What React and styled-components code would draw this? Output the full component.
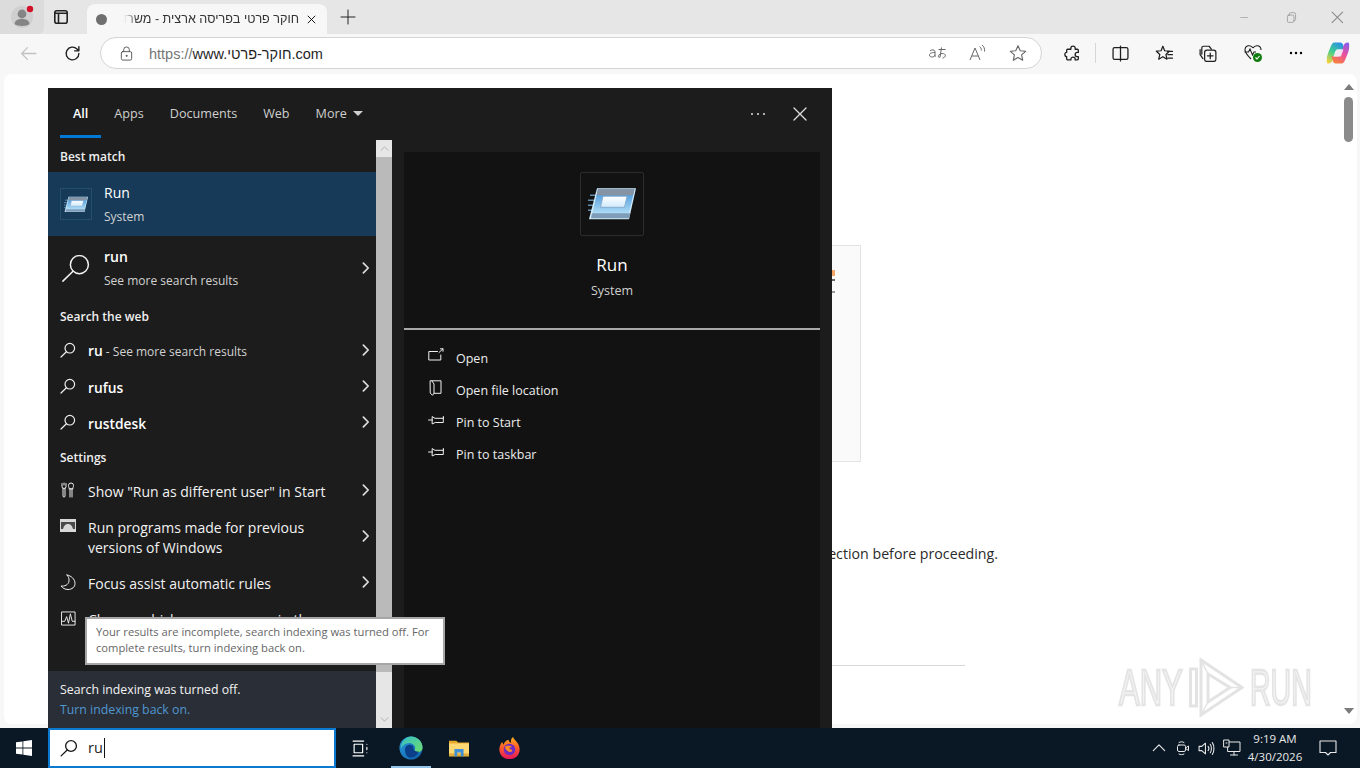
import React from 'react';
import styled, { createGlobalStyle } from 'styled-components';

const GlobalStyle = createGlobalStyle`
    html, body {
        margin:0;
        padding:0;
        background:#f7f7f7;
    }
    * {
        box-sizing:border-box;
    }
`

const uiFont = `"Open Sans", "Noto Sans", sans-serif`;

// Window frame
const Screen = styled.div`
    width:1360px;
    height:768px;
    display:flex;
    overflow:hidden;
    position:relative;
    flex-direction:column;
    font-family:${uiFont};
    background-color:#f7f7f7;
`

const TabStrip = styled.div`
    height:34px;
    display:flex;
    flex:none;
    align-items:flex-end;
    background-color:#e6e6e6;
`

const ProfileSlot = styled.div`
    width:44px;
    height:34px;
    display:flex;
    align-items:center;
    justify-content:center;
    background-color:#dcdcdc;
    border-bottom-right-radius:6px;
`

const StripButton = styled.div`
    width:${p => p.$w || 43}px;
    height:34px;
    display:flex;
    flex:none;
    color:${p => p.$color || '#222'};
    align-items:center;
    justify-content:center;
`

const Tab = styled.div`
    width:240px;
    height:30px;
    display:flex;
    flex:none;
    padding:0 10px 0 9px;
    align-items:center;
    background-color:#f7f7f7;
    border-radius:8px 8px 0 0;
`

const Favicon = styled.span`
    width:11px;
    height:11px;
    flex:none;
    border-radius:50%;
    background-color:#6f6f6f;
`

const TabTitle = styled.span`
    flex:1;
    height:18px;
    overflow:hidden;
    margin:0 7px 0 17px;
    font-size:12.6px;
    line-height:18px;
    color:#333;
    direction:rtl;
    white-space:nowrap;
    font-family:"Liberation Sans", sans-serif;
    mask-image:linear-gradient(to right, transparent 0, #000 14px);
`

const WindowControls = styled.div`
    display:flex;
    margin-left:auto;
    padding-right:0;
`

const Toolbar = styled.div`
    height:38px;
    flex:none;
    display:flex;
    align-items:center;
    background-color:#f7f7f7;
`

const ToolButton = styled.div`
    width:${p => p.$w || 44}px;
    height:32px;
    display:flex;
    flex:none;
    color:${p => p.$color || '#1f1f1f'};
    align-items:center;
    justify-content:center;
`

const AddressBar = styled.div`
    width:942px;
    height:32px;
    display:flex;
    flex:none;
    margin:0 7px 0 12px;
    padding:0 3px 0 18px;
    align-items:center;
    color:#555;
    background-color:#fff;
    border:1px solid #d4d4d4;
    border-radius:16px;
`

const UrlText = styled.span`
    font-size:14.5px;
    margin-left:15px;
    padding-top:1px;
    color:#1f1f1f;
    font-family:"Liberation Sans", sans-serif;
`

const UrlScheme = styled.span`
    color:#767676;
`

const AddressIcons = styled.div`
    display:flex;
    margin-left:auto;
    color:#666;
`

const ToolDivider = styled.div`
    width:1px;
    height:20px;
    flex:none;
    background-color:#d6d6d6;
`

// Page behind the search panel
const Viewport = styled.div`
    flex:1;
    display:flex;
    min-height:0;
    padding:2px 3px 4px 4px;
`

const Page = styled.div`
    flex:1;
    display:flex;
    overflow:hidden;
    position:relative;
    padding:171px 0 0 400px;
    background-color:#fff;
    border-radius:8px;
`

const PageColumn = styled.div`
    width:594px;
    display:flex;
    flex-direction:column;
`

const InfoCard = styled.div`
    width:457px;
    height:217px;
    display:flex;
    padding:24px 25px 0 0;
    flex-direction:column;
    align-items:flex-end;
    background-color:#fafafa;
    border:1px solid #e3e3e3;
`

const CardMark = styled.span`
    width:4px;
    height:${p => p.$h}px;
    margin-bottom:${p => p.$gap}px;
    background-color:${p => p.$color};
`

const Notice = styled.p`
    margin:82px 0 0;
    font-size:14.2px;
    line-height:20px;
    color:#2a2a2a;
    text-align:right;
    white-space:nowrap;
    font-family:${uiFont};
`

const PageRule = styled.hr`
    width:561px;
    height:1px;
    border:none;
    margin:101px 0 0;
    background-color:#d8d8d8;
`

const PageScrollbar = styled.div`
    width:15px;
    display:flex;
    position:absolute;
    top:10px;
    right:1px;
    bottom:10px;
    color:#7b7b7b;
    align-items:center;
    flex-direction:column;
    justify-content:space-between;
`

const PageThumb = styled.div`
    width:9px;
    height:45px;
    margin:7px 0 auto;
    border-radius:5px;
    background-color:#8b8b8b;
`

const Watermark = styled.div`
    display:flex;
    position:absolute;
    right:45px;
    bottom:6px;
    align-items:center;
    gap:6px;
    filter:blur(0.5px);
`

const WatermarkWord = styled.span`
    width:${p => p.$w}px;
    display:block;
    font-size:50px;
    line-height:60px;
    font-family:"Liberation Sans", sans-serif;
    color:#f4f4f4;
    -webkit-text-stroke:2.5px #e4e4e4;
    transform:scaleX(${p => p.$sx});
    transform-origin:left center;
    white-space:nowrap;
`

// Search panel
const SearchPanel = styled.div`
    width:784px;
    height:640px;
    display:flex;
    position:absolute;
    top:88px;
    left:48px;
    flex-direction:column;
    background-color:#1c1c1c;
`

const PanelHeader = styled.div`
    height:52px;
    flex:none;
    display:flex;
    padding:0 12px;
    align-items:stretch;
`

const HeaderTab = styled.div`
    display:flex;
    position:relative;
    padding:0 13px 2px;
    font-size:12.6px;
    align-items:center;
    gap:6px;
    font-weight:${p => p.$active ? 600 : 400};
    color:${p => p.$active ? '#fff' : '#cfcfcf'};

    &::after{
        content:'';
        position:absolute;
        left:0;
        right:0;
        bottom:2px;
        height:3px;
        background-color:${p => p.$active ? '#0078d4' : 'transparent'};
    }
`

const HeaderActions = styled.div`
    display:flex;
    margin-left:auto;
    color:#dedede;
    gap:26px;
    padding-right:12px;
    align-items:center;
`

const PanelBody = styled.div`
    flex:1;
    display:flex;
    min-height:0;
`

const ResultsColumn = styled.div`
    width:328px;
    flex:none;
    display:flex;
    overflow:hidden;
    flex-direction:column;
`

const SectionLabel = styled.div`
    height:32px;
    flex:none;
    display:flex;
    padding:${p => p.$low ? 2 : 0}px 0 0 12px;
    font-size:12px;
    font-weight:600;
    color:#f0f0f0;
    align-items:center;
`

const HeroRow = styled.div`
    height:64px;
    flex:none;
    display:flex;
    padding-left:12px;
    align-items:center;
    color:#fff;
    background-color:${p => p.$selected ? '#173a59' : 'transparent'};
`

const HeroIcon = styled.div`
    width:32px;
    height:32px;
    flex:none;
    display:flex;
    margin-right:12px;
    color:#f2f2f2;
    align-items:center;
    justify-content:center;
    border:1px solid ${p => p.$boxed ? '#24506f' : 'transparent'};
`

const HeroText = styled.div`
    flex:1;
    display:flex;
    padding-top:2px;
    flex-direction:column;
    gap:6px;
`

const HeroTitle = styled.span`
    font-size:14px;
    line-height:18px;
    font-weight:${p => p.$bold ? 600 : 400};
    color:#fff;
`

const HeroSub = styled.span`
    font-size:12px;
    line-height:18px;
    color:#d2d2d2;
`

const ResultRow = styled.div`
    height:${p => p.$h || 36}px;
    flex:none;
    display:flex;
    padding-left:12px;
    align-items:center;
    color:#f0f0f0;
`

const ResultIcon = styled.div`
    width:16px;
    height:20px;
    flex:none;
    display:flex;
    margin-right:12px;
    align-items:center;
    justify-content:center;
    align-self:${p => p.$top ? 'flex-start' : 'center'};
    margin-top:${p => p.$top ? 7 : 0}px;
`

const ResultText = styled.div`
    flex:1;
    padding-top:3px;
    font-size:14px;
    line-height:20px;
    color:#f2f2f2;
    white-space:${p => p.$wrap ? 'normal' : 'nowrap'};
`

const Bold = styled.span`
    font-weight:600;
    font-size:13.8px;
    color:#fff;
`

const Muted = styled.span`
    font-size:12px;
    color:#d2d2d2;
`

const Chevron = styled.div`
    width:20px;
    flex:none;
    display:flex;
    color:#dcdcdc;
    align-items:center;
    justify-content:center;
`

const IndexNotice = styled.div`
    height:57px;
    flex:none;
    display:flex;
    margin-top:auto;
    padding:9px 12px 0;
    font-size:12.3px;
    line-height:20px;
    color:#f2f2f2;
    flex-direction:column;
    background-color:#2a2e37;
`

const IndexLink = styled.span`
    color:#4f97d0;
`

const ResultsScrollbar = styled.div`
    width:16px;
    flex:none;
    display:flex;
    flex-direction:column;
    background-color:#e6e6e6;
    color:#a8a8a8;
`

const ScrollArrow = styled.div`
    height:${p => p.$h}px;
    flex:none;
    display:flex;
    align-items:center;
    justify-content:center;
    margin-top:${p => p.$auto ? 'auto' : 0};
`

const ScrollThumb = styled.div`
    height:515px;
    flex:none;
    background-color:#bababa;
`

const PreviewPane = styled.div`
    flex:1;
    display:flex;
    margin:12px 12px 0;
    flex-direction:column;
    background-color:#121212;
`

const PreviewHead = styled.div`
    height:178px;
    flex:none;
    display:flex;
    padding-top:20px;
    align-items:center;
    flex-direction:column;
    border-bottom:2px solid #a8a8a8;
`

const PreviewIcon = styled.div`
    width:64px;
    height:64px;
    display:flex;
    margin-bottom:18px;
    align-items:center;
    justify-content:center;
    border:1px solid #2c2c2c;
    border-radius:2px;
`

const PreviewTitle = styled.div`
    font-size:17px;
    line-height:22px;
    color:#fff;
`

const PreviewSub = styled.div`
    margin-top:6px;
    font-size:12.5px;
    line-height:18px;
    color:#d0d0d0;
`

const ActionList = styled.div`
    display:flex;
    padding:12px 0 0 24px;
    flex-direction:column;
`

const ActionRow = styled.div`
    height:32px;
    display:flex;
    font-size:12.5px;
    color:#ececec;
    align-items:center;
`

const ActionIcon = styled.div`
    width:16px;
    height:16px;
    flex:none;
    display:flex;
    margin:-4px 12px 0 0;
    color:#f0f0f0;
    align-items:center;
    justify-content:center;
`

const Tooltip = styled.div`
    width:360px;
    height:48px;
    position:absolute;
    top:617px;
    left:85px;
    padding:5px 9px;
    font-size:11.2px;
    line-height:16px;
    color:#666;
    background-color:#fff;
    border:2px solid #a6a6a6;
`

// Taskbar
const Taskbar = styled.div`
    height:40px;
    flex:none;
    display:flex;
    align-items:stretch;
    background-color:#0a1825;
`

const StartButton = styled.div`
    width:48px;
    display:flex;
    flex:none;
    align-items:center;
    justify-content:center;
`

const TaskSearch = styled.div`
    width:288px;
    display:flex;
    flex:none;
    padding-left:10px;
    align-items:center;
    color:#1a1a1a;
    background-color:#fff;
    border:2px solid #0a7ad1;
`

const TaskSearchText = styled.span`
    font-size:14.5px;
    margin-left:10px;
    padding-right:1px;
    line-height:20px;
    border-right:1px solid #111;
`

const TaskApps = styled.div`
    display:flex;
    padding-left:1px;
`

const TaskApp = styled.div`
    width:${p => p.$w || 48}px;
    display:flex;
    flex:none;
    color:#fff;
    position:relative;
    align-items:center;
    justify-content:center;

    &::after{
        content:'';
        position:absolute;
        left:8px;
        right:8px;
        bottom:0;
        height:2px;
        background-color:${p => p.$open ? '#93c5ea' : 'transparent'};
    }
`

const Tray = styled.div`
    display:flex;
    margin-left:auto;
    padding-right:8px;
    color:#e8e8e8;
    align-items:center;
`

const TrayIcon = styled.div`
    width:${p => p.$w || 24}px;
    display:flex;
    flex:none;
    align-items:center;
    justify-content:center;
`

const Clock = styled.div`
    width:58px;
    display:flex;
    font-size:11.5px;
    line-height:18px;
    color:#e8e8e8;
    align-items:center;
    flex-direction:column;
`

const Notify = styled.div`
    width:48px;
    display:flex;
    flex:none;
    align-items:center;
    justify-content:center;
`

// Drawings
const Line = ({ size = 16, w = 1.2, children, vb = 16 }) => (
    <svg width={size} height={size} viewBox={`0 0 ${vb} ${vb}`} fill="none" stroke="currentColor" strokeWidth={w} strokeLinecap="round" strokeLinejoin="round">
        {children}
    </svg>
)

const Lens = ({ size = 18, w = 1.2 }) => (
    <Line size={size} w={w}>
        <circle cx="9.8" cy="6.2" r="4.8" />
        <path d="M6.4 9.7 1 15" />
    </Line>
)

const ChevronRight = () => (
    <Line size={14} w={2}>
        <path d="M5 2.5 10.5 8 5 13.5" />
    </Line>
)

const RunIcon = ({ size = 48 }) => (
    <svg width={size} height={size * 0.7} viewBox="0 0 48 33">
        <defs>
            <linearGradient id={`run-${size}`} x1="0" y1="0" x2="0" y2="1">
                <stop offset="0" stopColor="#3f8fd6" />
                <stop offset="1" stopColor="#c4ecfd" />
            </linearGradient>
            <linearGradient id={`run-glass-${size}`} x1="0" y1="0" x2="0" y2="1">
                <stop offset="0" stopColor="#ffffff" />
                <stop offset="1" stopColor="#cfeafc" />
            </linearGradient>
        </defs>
        <path d="M2 8h7M0 13h6M0 18h5M0 23h4" stroke="#7fb6e0" strokeWidth="1.6" opacity="0.75" />
        <path d="M9 1h39l-7 31H1z" fill="#d4eefc" />
        <path d="M10 2h36.500l-6.500 29H3z" fill={`url(#run-${size})`} />
        <path d="M10 2h36.500l-1.500 6H8.500z" fill="#8593a3" />
        <path d="M4 26h38.500l-1.500 5H3z" fill="#7f9db8" />
        <path d="M15 9h24l-2.500 11H12.500z" fill={`url(#run-glass-${size})`} stroke="#7da3c4" strokeWidth="0.8" />
    </svg>
)

const AvatarIcon = () => (
    <svg width="24" height="24" viewBox="0 0 24 24">
        <circle cx="12" cy="12" r="11" fill="#cfcfcf" />
        <circle cx="12" cy="9" r="4.4" fill="#858585" />
        <path d="M4.500 19c.5-4 3.500-5 7.500-5s7 1 7.500 5c-2 2.500-13 2.500-15 0z" fill="#858585" />
        <circle cx="20" cy="4" r="3.200" fill="#d2112a" />
    </svg>
)

const SidebarIcon = () => (
    <Line size={16} w={1.6}>
        <rect x="1.800" y="1.800" width="12.400" height="12.400" rx="2" />
        <path d="M5.500 4.200v9.800M2 4.200h12" />
    </Line>
)

const EdgeLogo = () => (
    <svg width="24" height="24" viewBox="0 0 26 26">
        <defs>
            <linearGradient id="edge-blue" x1="0" y1="0" x2="1" y2="1">
                <stop offset="0" stopColor="#2a9fdc" />
                <stop offset="1" stopColor="#0c59a4" />
            </linearGradient>
            <linearGradient id="edge-green" x1="0" y1="0" x2="1" y2="1">
                <stop offset="0" stopColor="#36c0c8" />
                <stop offset="1" stopColor="#6fdc6a" />
            </linearGradient>
        </defs>
        <circle cx="13" cy="13" r="12.500" fill="url(#edge-blue)" />
        <path d="M13 .5C20 .5 25.500 6 25.500 12.500c0 3.500-3 5.500-6 5.500-2 0-3.500-.8-3.500-1.500 0-.6 1.500-1 1.500-3.500 0-3-3-5.500-6.500-5.500-4 0-7 2.500-9 6C2.500 6 7 .5 13 .5z" fill="url(#edge-green)" />
        <path d="M6.500 15c0-3.500 2.500-5.500 5.500-5.500 2 0 3.500 1.500 3.500 3 0 3 3 5 6 4-1.500 4-5 7-9 7-3.500 0-6-4-6-8.500z" fill="#0b3f8a" />
    </svg>
)

const FolderLogo = () => (
    <svg width="22" height="20" viewBox="0 0 24 22">
        <path d="M1 3h8l2 2h12v15H1z" fill="#e8a92b" />
        <rect x="1" y="6" width="22" height="14" fill="#fbd873" />
        <rect x="1" y="17" width="22" height="3" fill="#e0ad3a" />
        <path d="M7 12h10v8h-3v-4h-4v4H7z" fill="#3f8fd8" />
    </svg>
)

const FirefoxLogo = () => (
    <svg width="23" height="24" viewBox="0 0 24 26">
        <defs>
            <linearGradient id="ff" x1="0.5" y1="0" x2="0.5" y2="1">
                <stop offset="0" stopColor="#ffb11a" />
                <stop offset="0.5" stopColor="#ff5a2b" />
                <stop offset="1" stopColor="#e3135f" />
            </linearGradient>
        </defs>
        <path d="M12 25C5.500 25 1 20.500 1 14.500 1 11 2.500 8.500 4 6.500l1.500 3C6.500 6.500 9 4 11 4c0 2 2 3 3 3.500-1-2-.5-5 2-6.500 0 3 7 5.500 7 13.500C23 20.500 18.500 25 12 25z" fill="url(#ff)" />
        <circle cx="12" cy="14.500" r="6.200" fill="#6e2cc4" />
        <path d="M7 12c2-2 6-2 8 0-2-.5-3 .5-3 2 2 0 3 1 3 2.500-3 2-7 0-8-4.500z" fill="#ff8a1f" />
    </svg>
)

const lobe = 'M8.500 1.500H14c2 0 3 1.500 3.500 3.500l1 3.500H12c-1.500 0-2.500 1-3 2.500L6.500 19c-.5 2-2 3.500-4 3.500S.8 20.500.8 18C.8 14 3 10 4.500 6c1-2.500 2-4.500 4-4.500z';

const CopilotLogo = () => (
    <svg width="24" height="24" viewBox="0 0 24 24">
        <defs>
            <linearGradient id="cp-a" x1="0.7" y1="0" x2="0.2" y2="1">
                <stop offset="0" stopColor="#2a8fe8" />
                <stop offset="0.5" stopColor="#3fcf8e" />
                <stop offset="1" stopColor="#f6d23c" />
            </linearGradient>
            <linearGradient id="cp-b" x1="0.7" y1="0" x2="0.2" y2="1">
                <stop offset="0" stopColor="#f4813c" />
                <stop offset="0.5" stopColor="#ee4f9c" />
                <stop offset="1" stopColor="#8a5ce8" />
            </linearGradient>
        </defs>
        <path d={lobe} fill="url(#cp-a)" />
        <path d={lobe} fill="url(#cp-b)" transform="rotate(180 12 12)" />
        <path d="M10.500 8.500h7l-2.500 7H8z" fill="#f3e6f2" opacity="0.85" />
    </svg>
)

const PinIcon = () => (
    <Line size={16} w={1}>
        <path d="M.5 8H4.500M4.500 4.800l2.500 1.500h8.500v-1.800h-.2v6h-8l-2.800 1.300z" />
    </Line>
)

const resultsTop = [
    { key: 'ru', text: <><Bold>ru</Bold><Muted> - See more search results</Muted></> },
    { key: 'rufus', text: <Bold>rufus</Bold> },
    { key: 'rustdesk', text: <Bold>rustdesk</Bold> },
]

const actions = [
    {
        label: 'Open',
        icon: <Line size={16} w={1}><path d="M9.500 3.500H.8v8.500h12V7" /><path d="M11 4.500 15 .8M12.500.8H15v2.500" /></Line>,
    },
    {
        label: 'Open file location',
        icon: <Line size={16} w={1}><path d="M2.500 .8h10.500v12.500H6l-1.500 2-2-2z" /><path d="M4 1l2 3v9.500" /></Line>,
    },
    { label: 'Pin to Start', icon: <PinIcon /> },
    { label: 'Pin to taskbar', icon: <PinIcon /> },
]

export default function App() {
    return (
        <Screen>
            <GlobalStyle />

            <TabStrip>
                <ProfileSlot><AvatarIcon /></ProfileSlot>
                <StripButton $w={33}><SidebarIcon /></StripButton>
                <StripButton $w={10} />
                <Tab>
                    <Favicon />
                    <TabTitle>חוקר פרטי בפריסה ארצית - משרד חקירות</TabTitle>
                    <Line size={11} w={1.300}><path d="M3 3l10 10M13 3 3 13" /></Line>
                </Tab>
                <StripButton $w={42}>
                    <Line size={16} w={1}><path d="M8 1v14M1 8h14" /></Line>
                </StripButton>
                <WindowControls>
                    <StripButton $w={46} $color="#9a9a9a"><Line size={11} w={1}><path d="M1 8h10" /></Line></StripButton>
                    <StripButton $w={46} $color="#9a9a9a"><Line size={13} w={1}><rect x="3" y="5" width="8" height="9" rx="1.500" /><path d="M5.500 5V3.500A1.500 1.500 0 0 1 7 2h4a2 2 0 0 1 2 2v6.500a1.500 1.500 0 0 1-2 1.300" /></Line></StripButton>
                    <StripButton $w={46} $color="#8a8a8a"><Line size={13} w={1}><path d="M1 1l10 10M11 1 1 11" transform="scale(1.300)" /></Line></StripButton>
                </WindowControls>
            </TabStrip>

            <Toolbar>
                <ToolButton $color="#c2c2c2" $w={56}>
                    <Line size={17} w={1.200}><path d="M15 8H1.500M7 2.500 1.500 8 7 13.500" /></Line>
                </ToolButton>
                <ToolButton $w={32}>
                    <Line size={17} w={1.300}><path d="M14 8a6 6 0 1 1-1.800-4.300L14 5.500M14 1.500v4h-4" /></Line>
                </ToolButton>
                <AddressBar>
                    <Line size={15} w={1}><rect x="2.500" y="6" width="11" height="9" rx="1.500" /><path d="M5 6V4a3 3 0 0 1 6 0v2" /><circle cx="8" cy="10.500" r=".6" /></Line>
                    <UrlText><UrlScheme>https://</UrlScheme>www.חוקר-פרטי.com</UrlText>
                    <AddressIcons>
                        <ToolButton $color="#666" $w={40}>
                            <svg width="18" height="14" viewBox="0 0 18 14" fill="none" stroke="currentColor" strokeWidth="1">
                                <path d="M1 5c1-1.500 5-1.500 5 .5V11M6 6.500C2 6.500 .5 7.500 .5 9s1.500 2 2.500 2 2.500-.5 3-2" />
                                <path d="M9.500 3.500h7M12.500 1.500 11 11c0 1-1 .5-1.500 0-1-2 3-4.500 6-3 2 1.500 0 4-2 4" />
                            </svg>
                        </ToolButton>
                        <ToolButton $color="#666" $w={40}>
                            <svg width="18" height="17" viewBox="0 0 18 17" fill="none" stroke="currentColor" strokeWidth="1">
                                <path d="M1 15 6 3l5 12M2.800 11h6.400" />
                                <path d="M10.500 1.500c1.500 1 2 2.500 1.800 4M13 0c2 1.500 3 4 2.500 6.500" />
                            </svg>
                        </ToolButton>
                        <ToolButton $color="#666" $w={40}>
                            <Line size={18} w={1}><path d="M8 1.500 10 6l4.800.5-3.600 3.200 1 4.800L8 12l-4.200 2.500 1-4.800L1.200 6.500 6 6z" /></Line>
                        </ToolButton>
                    </AddressIcons>
                </AddressBar>
                <ToolButton $w={46}>
                    <Line size={17} w={1.200}><path d="M6.500 2.800C6.500 1.500 7.500 1 8.500 1s2 .6 2 1.800V4h2a1 1 0 0 1 1 1v2h-.8C11 7 10.500 8 10.500 9s.5 2 1.700 2h1.300v2a1 1 0 0 1-1 1h-2v-.8c0-1.200-1-1.700-2-1.700s-2 .5-2 1.700v.8H3.500a1 1 0 0 1-1-1v-2c-1.200 0-1.700-1-1.700-2S1.300 7 2.500 7V5a1 1 0 0 1 1-1h3z" /></Line>
                </ToolButton>
                <ToolDivider />
                <ToolButton $w={48}>
                    <Line size={17} w={1.200}><rect x="1" y="2.500" width="14" height="11" rx="1.500" /><path d="M8 1v14" /></Line>
                </ToolButton>
                <ToolButton $w={40}>
                    <Line size={18} w={1.100}><path d="M7 2 8.600 6l4.200.4-3.100 2.900.9 4.200L7 11.300 3.300 13.500l1-4.200L1.200 6.400 5.400 6zM11 6.500h4.500M11.500 9.500h4M11.500 12.500h4" /></Line>
                </ToolButton>
                <ToolButton $w={48}>
                    <Line size={18} w={1.100}><path d="M2.500 9V3.500A1.500 1.500 0 0 1 4 2h5l2 2.500" /><path d="M1 5v4.500L3.500 13" /><rect x="5" y="5.500" width="10" height="10" rx="2" /><path d="M10 8v5M7.500 10.500h5" /></Line>
                </ToolButton>
                <ToolButton $w={42}>
                    <svg width="20" height="20" viewBox="0 0 20 20" fill="none" stroke="currentColor" strokeWidth="1.100">
                        <path d="M10 5C8 1.500 2 2 2 7c0 3 3 6 6 9" />
                        <path d="M10 5c2-3.500 8-3 8 2" />
                        <path d="M1.500 9h4l1.500-3 2.500 6 1.500-3h2" />
                        <circle cx="14.500" cy="14.500" r="4.500" fill="#107c10" stroke="none" />
                        <path d="M12.500 14.500l1.500 1.500 2.500-3" stroke="#fff" />
                    </svg>
                </ToolButton>
                <ToolButton $w={44}>
                    <svg width="14" height="4" viewBox="0 0 14 4"><circle cx="2" cy="2" r="1.200" /><circle cx="7" cy="2" r="1.200" /><circle cx="12" cy="2" r="1.200" /></svg>
                </ToolButton>
                <ToolButton $w={40}><CopilotLogo /></ToolButton>
            </Toolbar>

            <Viewport>
                <Page>
                    <PageColumn>
                        <InfoCard>
                            <CardMark $h={6} $gap={3} $color="#f5a66a" />
                            <CardMark $h={2} $gap={10} $color="#666" />
                            <CardMark $h={2} $gap={0} $color="#999" />
                        </InfoCard>
                        <Notice>Please check your internet connection before proceeding.</Notice>
                        <PageRule />
                    </PageColumn>
                    <PageScrollbar>
                        <svg width="10" height="6" viewBox="0 0 10 6"><path d="M5 0l5 6H0z" fill="currentColor" /></svg>
                        <PageThumb />
                        <svg width="10" height="6" viewBox="0 0 10 6"><path d="M5 6 10 0H0z" fill="currentColor" /></svg>
                    </PageScrollbar>
                    <Watermark>
                        <WatermarkWord $w={64} $sx={0.62}>ANY</WatermarkWord>
                        <svg width="55" height="61" viewBox="0 0 55 61" fill="none" stroke="#e3e3e3" strokeWidth="3">
                            <path d="M1.500 12h6v37h-6z" />
                            <path d="M12 3 53 30.500 12 58z" />
                            <path d="M19 17 41 30.500 19 45z" />
                            <path d="M12 3 19 17M53 30.500H41M12 58l7-13" strokeWidth="1.500" />
                        </svg>
                        <WatermarkWord $w={62} $sx={0.57}>RUN</WatermarkWord>
                    </Watermark>
                </Page>
            </Viewport>

            <SearchPanel>
                <PanelHeader>
                    <HeaderTab $active>All</HeaderTab>
                    <HeaderTab>Apps</HeaderTab>
                    <HeaderTab>Documents</HeaderTab>
                    <HeaderTab>Web</HeaderTab>
                    <HeaderTab>
                        More
                        <svg width="10" height="5" viewBox="0 0 10 5"><path d="M0 0h10L5 5z" fill="currentColor" /></svg>
                    </HeaderTab>
                    <HeaderActions>
                        <svg width="16" height="4" viewBox="0 0 16 4" fill="currentColor"><circle cx="2" cy="2" r="1" /><circle cx="8" cy="2" r="1" /><circle cx="14" cy="2" r="1" /></svg>
                        <Line size={16} w={1.300}><path d="M2 2l12 12M14 2 2 14" /></Line>
                    </HeaderActions>
                </PanelHeader>

                <PanelBody>
                    <ResultsColumn>
                        <SectionLabel>Best match</SectionLabel>
                        <HeroRow $selected>
                            <HeroIcon $boxed><RunIcon size={24} /></HeroIcon>
                            <HeroText>
                                <HeroTitle>Run</HeroTitle>
                                <HeroSub>System</HeroSub>
                            </HeroText>
                        </HeroRow>
                        <HeroRow>
                            <HeroIcon><Lens size={32} w={0.800} /></HeroIcon>
                            <HeroText>
                                <HeroTitle $bold>run</HeroTitle>
                                <HeroSub>See more search results</HeroSub>
                            </HeroText>
                            <Chevron><ChevronRight /></Chevron>
                        </HeroRow>

                        <SectionLabel>Search the web</SectionLabel>
                        {resultsTop.map(row => (
                            <ResultRow key={row.key}>
                                <ResultIcon><Lens /></ResultIcon>
                                <ResultText>{row.text}</ResultText>
                                <Chevron><ChevronRight /></Chevron>
                            </ResultRow>
                        ))}

                        <SectionLabel $low>Settings</SectionLabel>
                        <ResultRow>
                            <ResultIcon>
                                <Line size={16} w={1}>
                                    <path d="M4 1v2M2 1.500v3a2 2 0 0 0 4 0v-3M3 6.500V14a1 1 0 0 0 2 0V6.500" />
                                    <path d="M10 15V7M12 15V7M9 6.800h4M10 7C9 6 8.500 5 8.500 3.500A2.500 2.500 0 0 1 11 1a2.500 2.500 0 0 1 2.500 2.500C13.500 5 13 6 12 7" />
                                </Line>
                            </ResultIcon>
                            <ResultText>Show "Run as different user" in Start</ResultText>
                            <Chevron><ChevronRight /></Chevron>
                        </ResultRow>
                        <ResultRow $h={56}>
                            <ResultIcon $top>
                                <svg width="16" height="13" viewBox="0 0 16 13">
                                    <rect width="16" height="13" fill="#d8d8d8" />
                                    <rect x="1" y="3" width="14" height="7" fill="#4a4a4a" />
                                    <path d="M3 10c1-4 3-5 5-5s4 1 5 5z" fill="#d8d8d8" />
                                </svg>
                            </ResultIcon>
                            <ResultText $wrap>Run programs made for previous versions of Windows</ResultText>
                            <Chevron><ChevronRight /></Chevron>
                        </ResultRow>
                        <ResultRow>
                            <ResultIcon>
                                <Line size={16} w={1}><path d="M7 1C11 1.500 15 5 15 9.500 15 13 12 15.500 8 15.500 5 15.500 2.500 14 1 12 4.500 12.500 8.500 11 9 7 9.300 4.500 8.500 2.500 7 1z" /></Line>
                            </ResultIcon>
                            <ResultText>Focus assist automatic rules</ResultText>
                            <Chevron><ChevronRight /></Chevron>
                        </ResultRow>
                        <ResultRow>
                            <ResultIcon>
                                <Line size={15} w={1}><rect x="1" y="1" width="14" height="14" /><path d="M1 11h3l2-5 2 7 2-10 2 8h3" /></Line>
                            </ResultIcon>
                            <ResultText>Choose which processes run in the</ResultText>
                        </ResultRow>

                        <IndexNotice>
                            <span>Search indexing was turned off.</span>
                            <IndexLink>Turn indexing back on.</IndexLink>
                        </IndexNotice>
                    </ResultsColumn>

                    <ResultsScrollbar>
                        <ScrollArrow $h={17}>
                            <Line size={9} w={1.500}><path d="M2 11l6-6 6 6" /></Line>
                        </ScrollArrow>
                        <ScrollThumb />
                        <ScrollArrow $h={17} $auto>
                            <Line size={9} w={1.500}><path d="M2 5l6 6 6-6" /></Line>
                        </ScrollArrow>
                    </ResultsScrollbar>

                    <PreviewPane>
                        <PreviewHead>
                            <PreviewIcon><RunIcon size={48} /></PreviewIcon>
                            <PreviewTitle>Run</PreviewTitle>
                            <PreviewSub>System</PreviewSub>
                        </PreviewHead>
                        <ActionList>
                            {actions.map(action => (
                                <ActionRow key={action.label}>
                                    <ActionIcon>{action.icon}</ActionIcon>
                                    {action.label}
                                </ActionRow>
                            ))}
                        </ActionList>
                    </PreviewPane>
                </PanelBody>
            </SearchPanel>

            <Tooltip>Your results are incomplete, search indexing was turned off. For complete results, turn indexing back on.</Tooltip>

            <Taskbar>
                <StartButton>
                    <svg width="16" height="16" viewBox="0 0 16 16" fill="#fff">
                        <path d="M0 2.300 6.500 1.400v6.200H0zM7.300 1.300 16 0v7.600H7.300zM0 8.400h6.500v6.200L0 13.700zM7.300 8.400H16V16l-8.700-1.300z" />
                    </svg>
                </StartButton>
                <TaskSearch>
                    <Lens />
                    <TaskSearchText>ru</TaskSearchText>
                </TaskSearch>
                <TaskApps>
                    <TaskApp $w={46}>
                        <Line size={17} w={1.100}><path d="M1 1h10M1 15h10M2 4h8v8H2zM14 4v.01M14 7v2M14 12v.01" /></Line>
                    </TaskApp>
                    <TaskApp $w={56} $open><EdgeLogo /></TaskApp>
                    <TaskApp $w={40}><FolderLogo /></TaskApp>
                    <TaskApp $w={60}><FirefoxLogo /></TaskApp>
                </TaskApps>
                <Tray>
                    <TrayIcon $w={26}>
                        <Line size={14} w={1.300}><path d="M1.500 11 8 4.500 14.500 11" /></Line>
                    </TrayIcon>
                    <TrayIcon $w={22}>
                        <Line size={16} w={1}><rect x="2.500" y="5" width="8" height="6.500" rx="1.500" /><path d="M10.500 8l3-2v4.500l-3-2M4 2.500c1.500-1 3.500-1 5 0M4 14c1.500 1 3.500 1 5 0" /></Line>
                    </TrayIcon>
                    <TrayIcon>
                        <Line size={17} w={1}><path d="M1 6v4h2.500L7 13V3L3.500 6zM9.500 6c.8 1 .8 3 0 4M11.500 4c1.500 2 1.500 6 0 8M13.500 2.500c2 3 2 8 0 11" /></Line>
                    </TrayIcon>
                    <TrayIcon $w={28}>
                        <Line size={18} vb={18} w={1}><rect x="5" y="3" width="12" height="9.500" /><rect x="1" y="1" width="5" height="7" fill="#0a1825" /><path d="M3 4h1M11 12.500v3.500M7.500 16h7" /></Line>
                    </TrayIcon>
                    <Clock>
                        <span>9:19 AM</span>
                        <span>4/30/2026</span>
                    </Clock>
                    <Notify>
                        <Line size={18} vb={18} w={1.100}><path d="M1 2h16v11.500h-5.500L9 16l-2.500-2.500H1z" /></Line>
                    </Notify>
                </Tray>
            </Taskbar>
        </Screen>
    )
}
